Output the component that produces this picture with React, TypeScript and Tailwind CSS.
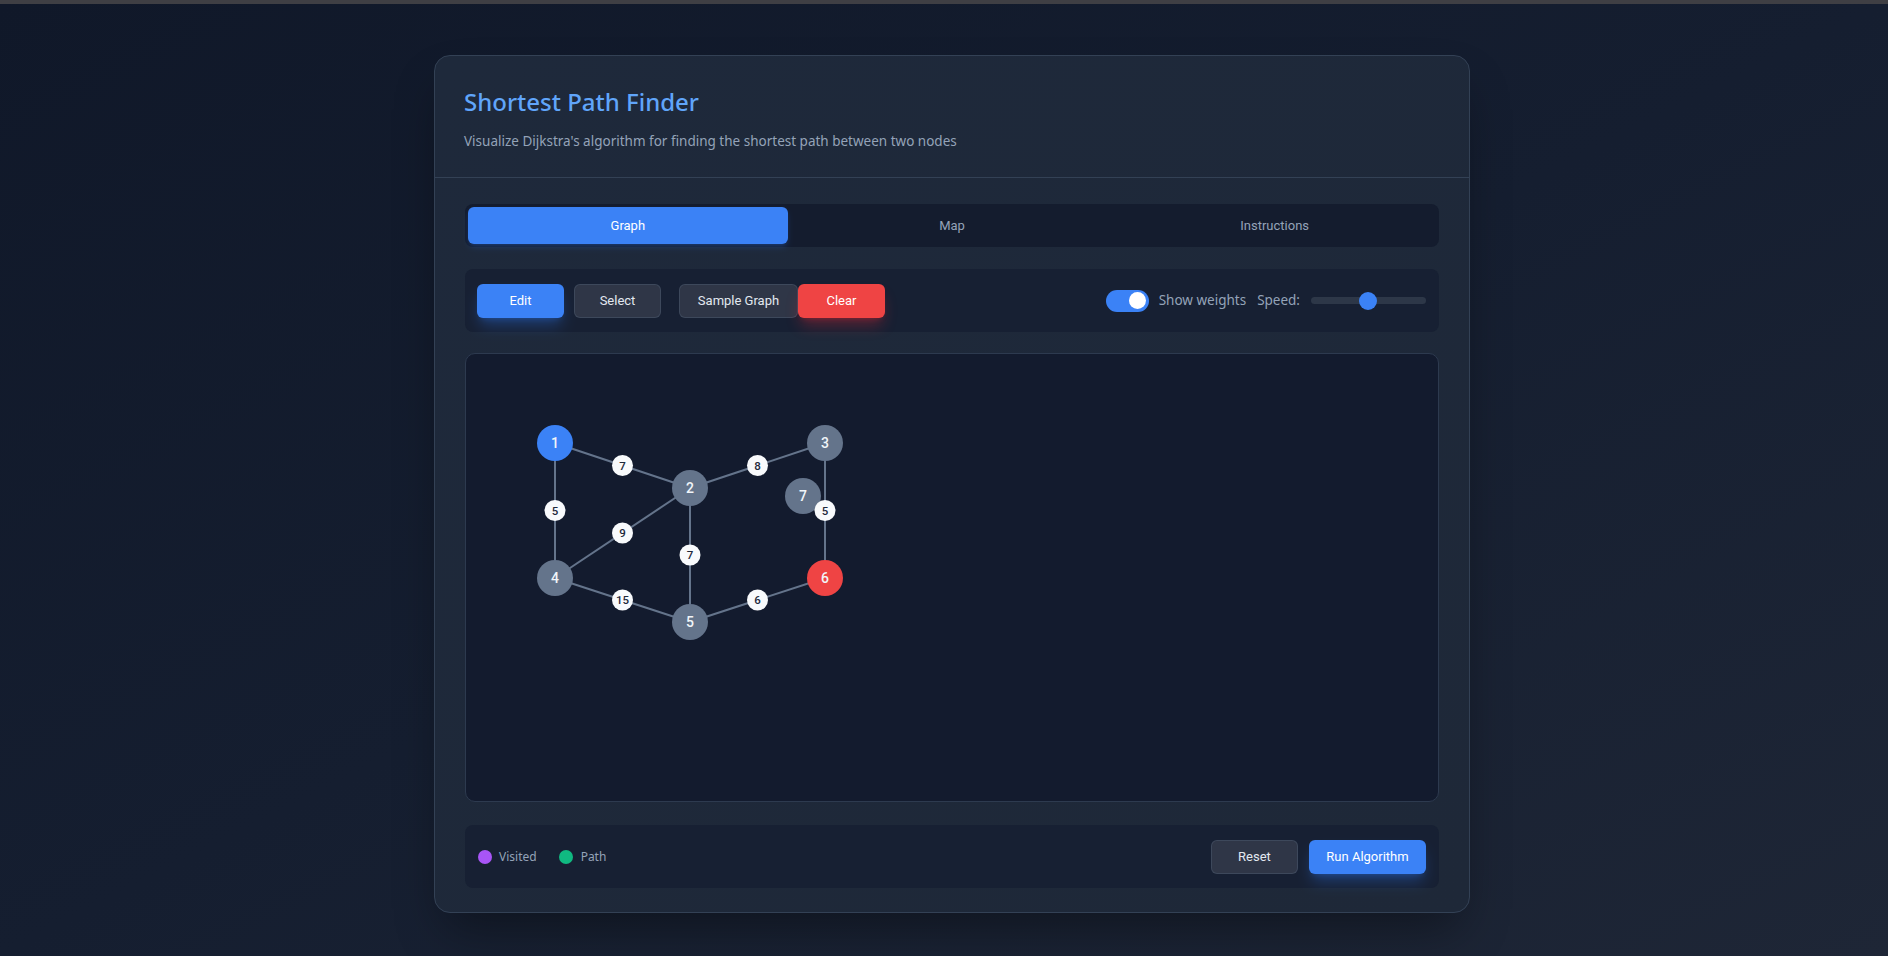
import React from 'react';

const nodes = [
  { id: 7, x: 337, y: 142, fill: '#64748b' },
  { id: 1, x: 89, y: 89, fill: '#3b82f6' },
  { id: 2, x: 224, y: 134, fill: '#64748b' },
  { id: 3, x: 359, y: 89, fill: '#64748b' },
  { id: 4, x: 89, y: 224, fill: '#64748b' },
  { id: 5, x: 224, y: 268, fill: '#64748b' },
  { id: 6, x: 359, y: 224, fill: '#ef4444' },
];

const edges: [number, number, number][] = [
  [1, 2, 7],
  [2, 3, 8],
  [1, 4, 5],
  [2, 4, 9],
  [2, 5, 7],
  [3, 6, 5],
  [4, 5, 15],
  [5, 6, 6],
];

const pos = (id: number) => nodes.find((n) => n.id === id)!;

function GraphCanvas() {
  return (
    <svg width="973" height="447" className="block">
      {edges.map(([a, b], i) => (
        <line
          key={i}
          x1={pos(a).x}
          y1={pos(a).y}
          x2={pos(b).x}
          y2={pos(b).y}
          stroke="#64748b"
          strokeWidth={2}
        />
      ))}
      {nodes.map((n) => (
        <g key={n.id}>
          <circle cx={n.x} cy={n.y} r={18} fill={n.fill} />
          <text
            x={n.x}
            y={n.y + 5}
            textAnchor="middle"
            fontSize="14"
            fontWeight="500"
            fill="#f1f5f9"
            fontFamily="Roboto, 'Liberation Sans', sans-serif"
          >
            {n.id}
          </text>
        </g>
      ))}
      {edges.map(([a, b, w], i) => {
        const mx = (pos(a).x + pos(b).x) / 2;
        const my = (pos(a).y + pos(b).y) / 2;
        return (
          <g key={'w' + i}>
            <circle cx={mx} cy={my} r={10.5} fill="#f8fafc" />
            <text
              x={mx}
              y={my + 4}
              textAnchor="middle"
              fontSize="11.5"
              fontWeight="500"
              fill="#1e293b"
              fontFamily="Roboto, 'Liberation Sans', sans-serif"
            >
              {w}
            </text>
          </g>
        );
      })}
    </svg>
  );
}

export default function App() {
  return (
    <div className="min-h-screen border-t-4 border-[#3f3f44] bg-gradient-to-br from-[#101829] via-[#151e30] to-[#1e2636] pl-4 pt-[51px] pb-10 font-['Noto_Sans',sans-serif]">
      <div className="mx-auto w-[1036px] rounded-2xl border border-[#334155] bg-gradient-to-br from-[#1e293b] to-[#1e2838] shadow-2xl shadow-black/40">
        {/* Header */}
        <div className="border-b border-[#334155] px-[29px] pt-[30px] pb-[26px]">
          <h1 className="text-[24px] leading-[32px] font-medium text-[#60a5fa]">Shortest Path Finder</h1>
          <p className="mt-[13px] text-[13.5px] leading-[20px] text-[#94a3b8]">
            Visualize Dijkstra's algorithm for finding the shortest path between two nodes
          </p>
        </div>

        <div className="px-[30px] pt-[26px] pb-[24px] font-['Roboto',sans-serif]">
          {/* Tabs */}
          <div className="grid h-[43px] grid-cols-3 rounded-lg bg-[#141c2e] p-[3px] text-[13px]">
            <button className="mr-[3px] rounded-md bg-[#3b82f6] text-white shadow-md shadow-blue-500/20">Graph</button>
            <button className="rounded-md text-[#94a3b8]">Map</button>
            <button className="rounded-md text-[#94a3b8]">Instructions</button>
          </div>

          {/* Toolbar */}
          <div className="mt-[22px] flex h-[63px] items-center justify-between rounded-lg bg-[#172033] pl-3 pr-[13px]">
            <div className="flex items-center text-[13px]">
              <button className="h-[34px] w-[87px] rounded-md bg-[#3b82f6] text-white shadow-lg shadow-blue-500/30">Edit</button>
              <button className="ml-[10px] h-[34px] w-[87px] rounded-md border border-[#475569]/60 bg-[#2f3647] text-[#e2e8f0]">Select</button>
              <button className="ml-[18px] h-[34px] w-[119px] rounded-md border border-[#475569]/60 bg-[#2f3647] text-[#e2e8f0]">Sample Graph</button>
              <button className="h-[34px] w-[87px] rounded-md bg-[#ef4444] text-white shadow-lg shadow-red-500/30">Clear</button>
            </div>
            <div className="flex items-center font-['Noto_Sans',sans-serif] text-[13.5px] text-[#94a3b8]">
              <div className="relative h-[22px] w-[43px] rounded-full bg-[#3b82f6]">
                <div className="absolute top-[2.5px] right-[3px] h-[17px] w-[17px] rounded-full bg-white" />
              </div>
              <span className="ml-[10px]">Show weights</span>
              <span className="ml-[11px]">Speed:</span>
              <div className="relative ml-[11px] h-[7px] w-[115px] rounded-full bg-[#2d3748]">
                <div className="absolute top-[-5.5px] left-[48px] h-[18px] w-[18px] rounded-full bg-[#3b82f6]" />
              </div>
            </div>
          </div>

          {/* Canvas */}
          <div className="mt-[21px] h-[449px] overflow-hidden rounded-[10px] border border-[#2d3a4f] bg-[#131b2e]">
            <GraphCanvas />
          </div>

          {/* Legend / actions */}
          <div className="mt-[23px] flex h-[63px] items-center justify-between rounded-lg bg-[#172033] pl-[13px] pr-[13px]">
            <div className="flex items-center font-['Noto_Sans',sans-serif] text-[12px] text-[#94a3b8]">
              <span className="h-[14px] w-[14px] rounded-full bg-[#a855f7]" />
              <span className="ml-[7px]">Visited</span>
              <span className="ml-[22px] h-[14px] w-[14px] rounded-full bg-[#10b981]" />
              <span className="ml-[8px]">Path</span>
            </div>
            <div className="flex items-center text-[13px]">
              <button className="h-[34px] w-[87px] rounded-md border border-[#475569]/60 bg-[#2f3647] text-[#e2e8f0]">Reset</button>
              <button className="ml-[11px] h-[34px] w-[117px] rounded-md bg-[#3b82f6] text-white shadow-lg shadow-blue-500/30">Run Algorithm</button>
            </div>
          </div>
        </div>
      </div>
    </div>
  );
}
